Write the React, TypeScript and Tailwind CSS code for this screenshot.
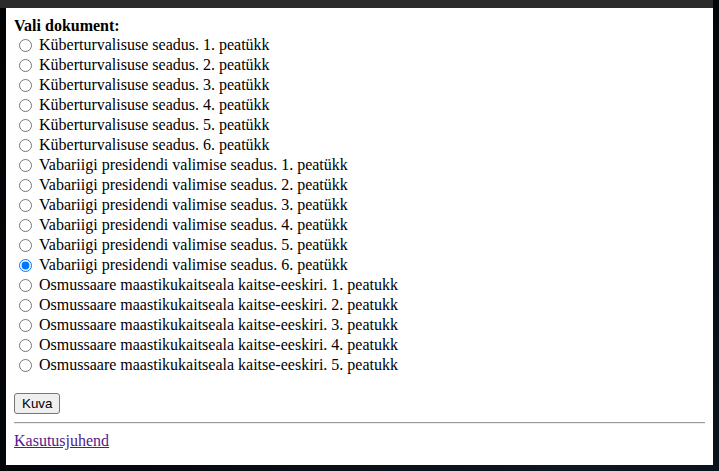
const documents = [
  "Küberturvalisuse seadus. 1. peatükk",
  "Küberturvalisuse seadus. 2. peatükk",
  "Küberturvalisuse seadus. 3. peatükk",
  "Küberturvalisuse seadus. 4. peatükk",
  "Küberturvalisuse seadus. 5. peatükk",
  "Küberturvalisuse seadus. 6. peatükk",
  "Vabariigi presidendi valimise seadus. 1. peatükk",
  "Vabariigi presidendi valimise seadus. 2. peatükk",
  "Vabariigi presidendi valimise seadus. 3. peatükk",
  "Vabariigi presidendi valimise seadus. 4. peatükk",
  "Vabariigi presidendi valimise seadus. 5. peatükk",
  "Vabariigi presidendi valimise seadus. 6. peatükk",
  "Osmussaare maastikukaitseala kaitse-eeskiri. 1. peatukk",
  "Osmussaare maastikukaitseala kaitse-eeskiri. 2. peatukk",
  "Osmussaare maastikukaitseala kaitse-eeskiri. 3. peatukk",
  "Osmussaare maastikukaitseala kaitse-eeskiri. 4. peatukk",
  "Osmussaare maastikukaitseala kaitse-eeskiri. 5. peatukk",
];

export default function App() {
  return (
    <div className="w-[719px] h-[471px] overflow-hidden bg-[radial-gradient(ellipse_at_80%_100%,#0d1722_0%,#04070b_60%,#020304_100%)] font-['Liberation_Serif',serif] text-base text-black">
      <div className="w-[713px] h-2 bg-[#2b2b2b]" />
      <div className="pl-[6px]">
        <div className="w-[707px] h-[457px] bg-white px-2 pt-2">
          <form>
            <div className="font-bold leading-[19px]">Vali dokument:</div>
            {documents.map((doc, i) => (
              <label key={i} className="flex items-center h-5">
                <input
                  type="radio"
                  name="doc"
                  defaultChecked={i === 11}
                  className="ml-[5px] mr-[3px] w-[13px] h-[13px]"
                />
                <span className="pl-1 leading-[18px]">{doc}</span>
              </label>
            ))}
            <button
              type="button"
              className="mt-[18px] h-[21px] px-[7px] border border-[#767676] bg-[#efefef] rounded-[3px] font-['Liberation_Sans',sans-serif] text-[13.33px] leading-none"
            >
              Kuva
            </button>
          </form>
          <hr className="mt-[7px] border-t border-t-[#9a9a9a] border-b border-b-[#eeeeee]" />
          <a href="#" className="block w-max mt-[8px] leading-[18px] text-[#551a8b] underline">
            Kasutusjuhend
          </a>
        </div>
      </div>
    </div>
  );
}
